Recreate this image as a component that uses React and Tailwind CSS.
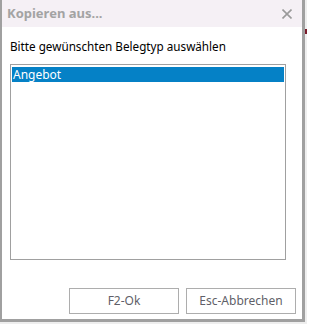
export default function App() {
  return (
    <div className="flex w-[307px] h-[324px] bg-[#eeeeee] font-['Noto_Sans','Open_Sans',sans-serif]">
      <div className="flex flex-col w-[305px] h-[322px] bg-white border-l-2 border-r-[3px] border-b-[3px] border-[#a0a0a0]">
        <div className="flex items-center justify-between h-[27px] bg-[#f5f0f5] pl-[5px] pr-[10px]">
          <span className="text-[13px] font-bold text-[#a3a3a3] leading-none">Kopieren aus...</span>
          <svg width="10" height="10" viewBox="0 0 10 10" className="text-[#9a9a9a]">
            <path d="M0.5 0.5 L9.5 9.5 M9.5 0.5 L0.5 9.5" stroke="currentColor" strokeWidth="1.6" />
          </svg>
        </div>
        <div className="flex flex-col flex-1 pl-[8px] pr-[6px]">
          <p className="mt-[11px] text-[11.7px] leading-[16px] text-black">Bitte gewünschten Belegtyp auswählen</p>
          <div className="mt-[10px] w-[276px] h-[196px] border border-[#a0a0a0] pt-[2px] px-px">
            <div className="h-[15px] bg-[#0581c6] text-white text-[12px] leading-[15px] pl-px">Angebot</div>
          </div>
          <div className="flex justify-end gap-[7px] mt-[28px]">
            <button className="w-[110px] h-[26px] border border-[#adadad] bg-white text-[12px] text-[#5f5f68]">F2-Ok</button>
            <button className="w-[110px] h-[26px] border border-[#adadad] bg-white text-[12px] text-[#5f5f68]">Esc-Abbrechen</button>
          </div>
        </div>
      </div>
      <div className="flex flex-col w-[2px] pt-[29px]">
        <div className="h-[5px] w-[2px] bg-[#7a1a2a]" />
      </div>
    </div>
  )
}
